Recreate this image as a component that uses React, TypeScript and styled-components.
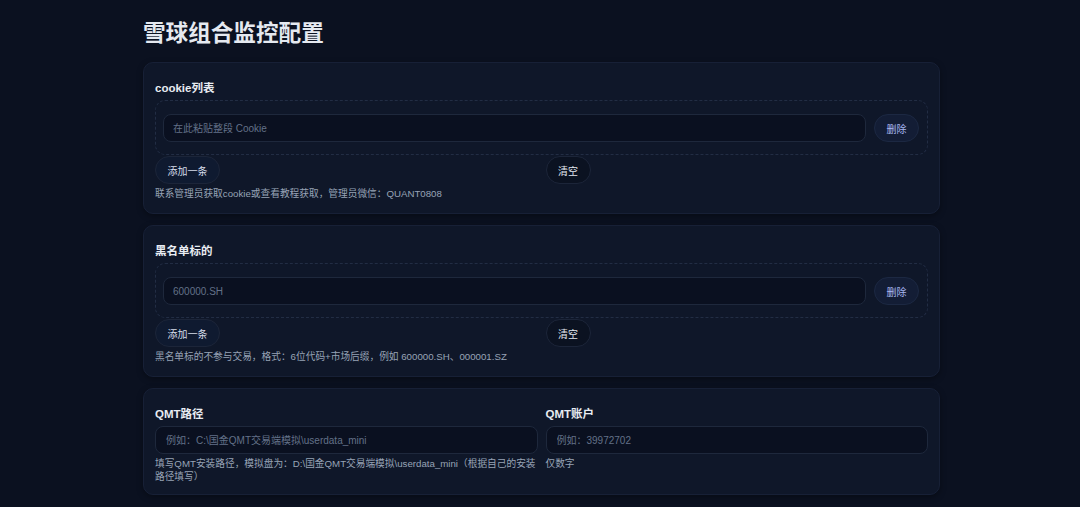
import React from "react";
import styled, { createGlobalStyle } from "styled-components";

const Global = createGlobalStyle`
  html, body { margin: 0; padding: 0; background: #0b1120; }
  body {
    font-family: "Liberation Sans", "Noto Sans CJK SC", sans-serif;
    color: #e2e8f0;
  }
  * { box-sizing: border-box; }
`;

const Page = styled.div`
  width: 797px;
  margin: 0 auto;
  padding: 17px 0 0 3px;
  box-sizing: content-box;
`;

const Title = styled.h1`
  margin: 0 0 12px;
  font-size: 22.6px;
  line-height: 33px;
  font-weight: 700;
  color: #e5e9f0;
`;

const Card = styled.section`
  background: #0f1729;
  border: 1px solid #172036;
  border-radius: 10px;
  padding: 16px 11px 11px;
  margin-bottom: 11px;
  box-shadow: 0 2px 6px rgba(0, 0, 0, 0.35);
`;

const Label = styled.div`
  font-size: 11.5px;
  line-height: 18px;
  font-weight: 700;
  color: #e8ecf2;
  margin-bottom: 3px;
`;

const ListBox = styled.div`
  border: 1px dashed #222d44;
  border-radius: 10px;
  padding: 13px 8px 12px 7px;
`;

const ItemRow = styled.div`
  display: flex;
  align-items: center;
  gap: 8px;
  & > input { flex: 1; }
`;

const Input = styled.input<{ $pad?: number }>`
  width: 100%;
  height: 28px;
  background: #0a1020;
  border: 1px solid #1e283c;
  border-radius: 8px;
  padding: 0 ${(p) => p.$pad ?? 9}px;
  font-family: inherit;
  font-size: 10px;
  color: #cbd5e1;
  outline: none;
  &::placeholder { color: #637188; }
`;

const Pill = styled.button<{ $variant: "danger" | "add" | "plain" }>`
  height: 28px;
  border-radius: 14px;
  font-family: inherit;
  font-size: 10px;
  padding: 0 11.5px;
  flex: none;
  cursor: pointer;
  background: ${(p) =>
    p.$variant === "danger" ? "#131d35" : p.$variant === "add" ? "#0f1a30" : "#0b1221"};
  border: 1px solid ${(p) => (p.$variant === "danger" ? "#1c2842" : "#1c2539")};
  color: ${(p) => (p.$variant === "danger" ? "#a8b6f0" : p.$variant === "add" ? "#d5dcea" : "#e2e8f0")};
`;

const Grid = styled.div`
  display: grid;
  grid-template-columns: 1fr 1fr;
  column-gap: 8px;
`;

const ButtonCell = styled.div`
  display: flex;
  margin-top: 1px;
`;

const Help = styled.div`
  font-size: 9.7px;
  line-height: 16px;
  color: #97a3b6;
  margin-top: 2px;
`;

const FieldHelp = styled.div`
  font-size: 9.7px;
  line-height: 13px;
  color: #97a3b6;
  margin-top: 3px;
`;

const Field = styled.div`
  display: flex;
  flex-direction: column;
`;

function ListCard(props: { label: string; placeholder: string; help: string }) {
  return (
    <Card>
      <Label>{props.label}</Label>
      <ListBox>
        <ItemRow>
          <Input placeholder={props.placeholder} />
          <Pill $variant="danger">删除</Pill>
        </ItemRow>
      </ListBox>
      <Grid>
        <ButtonCell>
          <Pill $variant="add">添加一条</Pill>
        </ButtonCell>
        <ButtonCell>
          <Pill $variant="plain">清空</Pill>
        </ButtonCell>
      </Grid>
      <Help>{props.help}</Help>
    </Card>
  );
}

export default function App() {
  return (
    <>
      <Global />
      <Page>
        <Title>雪球组合监控配置</Title>
        <ListCard
          label="cookie列表"
          placeholder="在此粘贴整段 Cookie"
          help="联系管理员获取cookie或查看教程获取，管理员微信：QUANT0808"
        />
        <ListCard
          label="黑名单标的"
          placeholder="600000.SH"
          help="黑名单标的不参与交易，格式：6位代码+市场后缀，例如 600000.SH、000001.SZ"
        />
        <Card>
          <Grid>
            <Field>
              <Label>QMT路径</Label>
              <Input $pad={10} placeholder="例如：C:\国金QMT交易端模拟\userdata_mini" />
              <FieldHelp>
                填写QMT安装路径，模拟盘为：D:\国金QMT交易端模拟\userdata_mini（根据自己的安装路径填写）
              </FieldHelp>
            </Field>
            <Field>
              <Label>QMT账户</Label>
              <Input $pad={10} placeholder="例如：39972702" />
              <FieldHelp>仅数字</FieldHelp>
            </Field>
          </Grid>
        </Card>
      </Page>
    </>
  );
}
